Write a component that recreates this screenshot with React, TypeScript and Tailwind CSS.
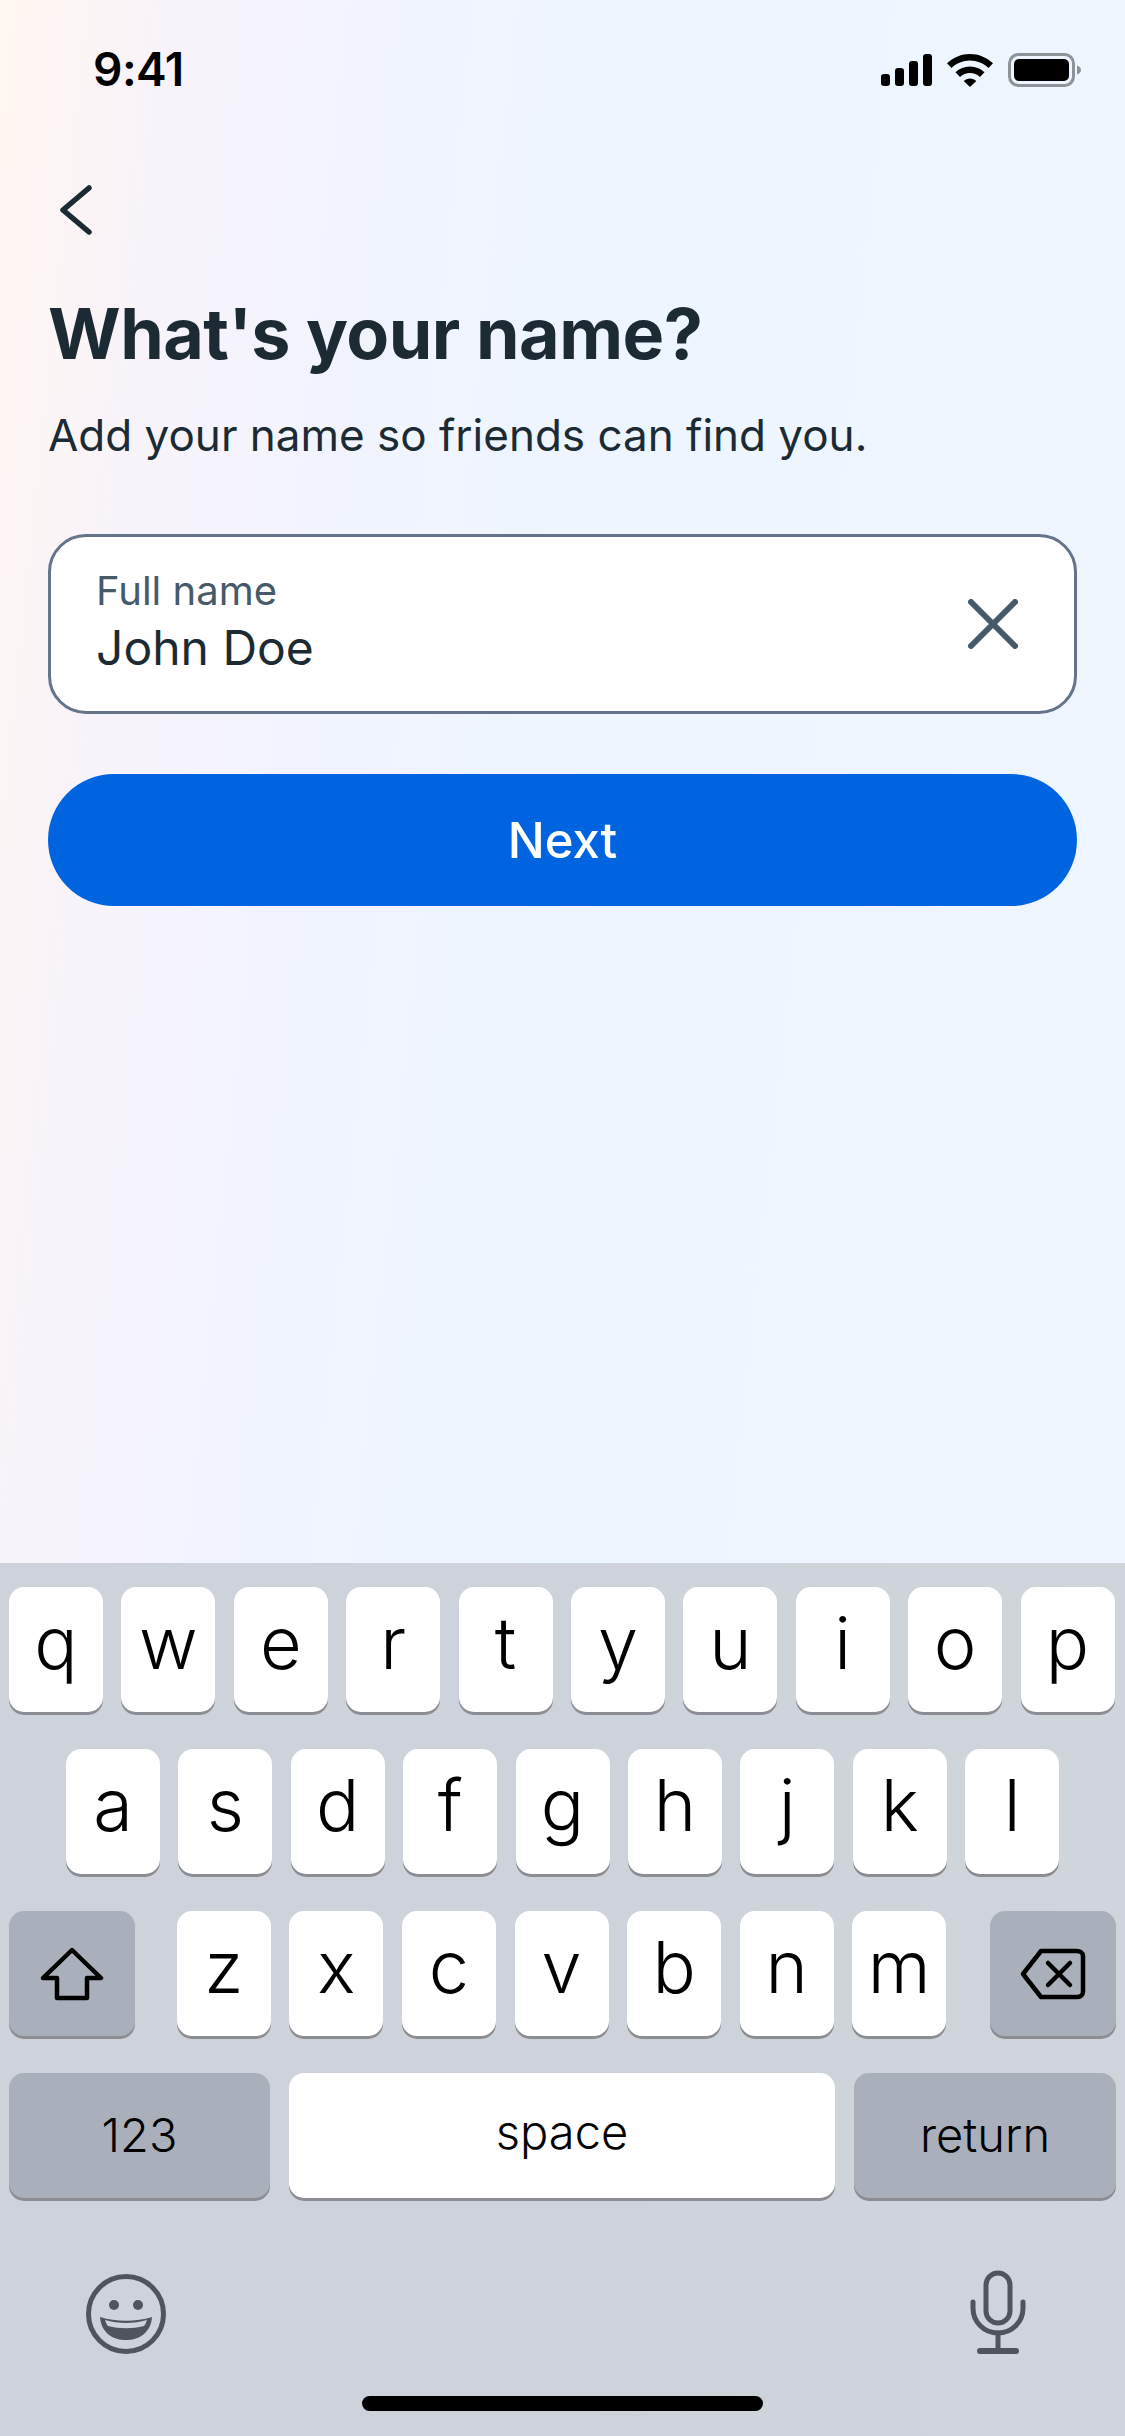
import { ReactNode } from "react";

const rows = ["qwertyuiop", "asdfghjkl", "zxcvbnm"];

function Key({ children, dark, className = "" }: { children: ReactNode; dark?: boolean; className?: string }) {
  return (
    <div
      className={`flex h-[125px] items-center justify-center rounded-[15px] text-black shadow-[0_3px_0_#8b8d92] ${
        dark ? "bg-[#a9b0bc]" : "bg-white"
      } ${className}`}
    >
      {children}
    </div>
  );
}

function Letter({ ch }: { ch: string }) {
  return (
    <Key className="w-[94px] shrink-0 pb-[14px] text-[72px] font-[350] leading-none">
      {ch}
    </Key>
  );
}

function StatusIcons() {
  return (
    <div className="mb-[4px] flex items-center gap-[15px]">
      <svg width="51" height="32" viewBox="0 0 51 32" fill="#000">
        <rect x="0" y="20" width="9" height="12" rx="3" />
        <rect x="14" y="14" width="9" height="18" rx="3" />
        <rect x="28" y="7" width="9" height="25" rx="3" />
        <rect x="42" y="0" width="9" height="32" rx="3" />
      </svg>
      <svg width="46" height="33" viewBox="0 0 46 33" fill="#000">
        <path d="M23 0C31.5 0 39.5 3.3 46 9.300L41.500 14C36.500 9.300 30 6.500 23 6.500S9.500 9.300 4.500 14L0 9.300C6.500 3.300 14.500 0 23 0Z" />
        <path d="M23 12.500C28.500 12.500 33.600 14.600 37.500 18.300L33 22.900C30.200 20.300 26.800 18.900 23 18.900S15.800 20.300 13 22.900L8.500 18.300C12.400 14.600 17.500 12.500 23 12.500Z" />
        <path d="M23 24.500C25.400 24.500 27.600 25.400 29.300 27L23 33L16.700 27C18.400 25.400 20.600 24.500 23 24.500Z" />
      </svg>
      <svg width="74" height="34" viewBox="0 0 74 34" fill="none">
        <rect x="1.500" y="1.500" width="64" height="31" rx="9" stroke="#8e9399" strokeWidth="3" />
        <rect x="6" y="6" width="55" height="22" rx="5" fill="#000" />
        <path d="M69 12.500C71.500 13.300 73 15 73 17S71.500 20.700 69 21.500Z" fill="#8e9399" />
      </svg>
    </div>
  );
}

export default function App() {
  return (
    <div className="flex h-[2436px] w-[1125px] flex-col overflow-hidden bg-[linear-gradient(96deg,#fff7f0_0%,#f8f3fb_13%,#f1f4fd_28%,#edf5ff_50%,#eff6ff_100%)] font-['Inter',sans-serif]">
      <div className="flex flex-1 flex-col">
        <div className="flex h-[91px] items-end justify-between pl-[93px] pr-[43px]">
          <span className="text-[46px] font-semibold leading-[44px] tracking-[-0.5px] text-black">9:41</span>
          <StatusIcons />
        </div>

        <div className="pl-[59px] pt-[94px]">
          <svg width="34" height="50" viewBox="0 0 34 50" fill="none" stroke="#1c2b33" strokeWidth="5.500" strokeLinecap="round" strokeLinejoin="round">
            <path d="M30 3L4 25L30 47" />
          </svg>
        </div>

        <div className="px-[48px]">
          <h1 className="pt-[57px] text-[70px] font-bold leading-[84px] tracking-[-0.5px] text-[#1c2b33]">What's your name?</h1>
          <p className="pt-[31px] text-[44px] leading-[56px] text-[#1c2b33]">Add your name so friends can find you.</p>

          <div className="mt-[71px] flex h-[180px] items-center justify-between rounded-[38px] border-[3px] border-[#64748a] bg-white pl-[45px] pr-[56px]">
            <div className="flex flex-col">
              <span className="text-[40px] leading-[48px] text-[#465a69]">Full name</span>
              <span className="text-[48px] leading-[66px] text-[#1c2b33]">John Doe</span>
            </div>
            <svg width="50" height="50" viewBox="0 0 50 50" fill="none" stroke="#465a69" strokeWidth="6" strokeLinecap="round">
              <path d="M3 3L47 47M47 3L3 47" />
            </svg>
          </div>

          <button className="mt-[60px] flex h-[132px] w-full items-center justify-center rounded-full bg-[#0064e0] pt-[2px] text-[49px] font-medium text-white">
            Next
          </button>
        </div>
      </div>

      <div className="flex h-[873px] flex-col bg-[linear-gradient(90deg,#ced2db_0%,#ced3db_50%,#cfd5da_100%)] px-[9px] pt-[24px]">
        <div className="flex gap-[18.400px]">
          {rows[0].split("").map((c) => (
            <Letter key={c} ch={c} />
          ))}
        </div>
        <div className="mt-[37px] flex justify-center gap-[18.400px]">
          {rows[1].split("").map((c) => (
            <Letter key={c} ch={c} />
          ))}
        </div>
        <div className="mt-[37px] flex justify-between">
          <Key dark className="w-[126px]">
            <svg width="64" height="54" viewBox="0 0 64 54" fill="none" stroke="#000" strokeWidth="4.500" strokeLinejoin="round">
              <path d="M32 3L61 31H47V51H17V31H3Z" />
            </svg>
          </Key>
          <div className="flex gap-[18.600px] pr-[2px]">
            {rows[2].split("").map((c) => (
              <Letter key={c} ch={c} />
            ))}
          </div>
          <Key dark className="w-[126px]">
            <svg width="66" height="52" viewBox="0 0 66 52" fill="none" stroke="#000" strokeWidth="4.500" strokeLinejoin="round" strokeLinecap="round">
              <path d="M21 3H57C60 3 63 5 63 8V44C63 47 60 49 57 49H21L3 26Z" />
              <path d="M28 15L50 37M50 15L28 37" />
            </svg>
          </Key>
        </div>
        <div className="mt-[37px] flex justify-between">
          <Key dark className="w-[261px] text-[47px] font-[350]">123</Key>
          <Key className="w-[546px] pb-[6px] text-[47px] font-[350]">space</Key>
          <Key dark className="w-[262px] text-[47px] font-[350]">return</Key>
        </div>

        <div className="mt-[72px] flex h-[84px] items-end justify-between pl-[77px] pr-[90px]">
          <svg width="80" height="80" viewBox="0 0 80 80" fill="none">
            <circle cx="40" cy="40" r="37.500" stroke="#50555c" strokeWidth="5" />
            <circle cx="28" cy="31" r="5" fill="#50555c" />
            <circle cx="52" cy="31" r="5" fill="#50555c" />
            <path d="M14 43C30 48 50 48 66 43C65 58 54 66 40 66S15 58 14 43Z" fill="#50555c" />
            <path d="M19 46C32 50 48 50 61 46C60 49 59 51 58 52C46 55 34 55 22 52C21 51 20 49 19 46Z" fill="#ced3dc" />
          </svg>
          <svg width="56" height="84" viewBox="0 0 56 84" fill="none" stroke="#50555c" strokeWidth="5" strokeLinecap="round">
            <rect x="16" y="3" width="24" height="50" rx="12" />
            <path d="M3 32V38C3 52 14 63 28 63S53 52 53 38V32" />
            <path d="M28 63V81" />
            <path d="M10 81H46" strokeWidth="6" />
          </svg>
        </div>

        <div className="mt-[42px] flex justify-center">
          <div className="h-[15px] w-[401px] rounded-full bg-black" />
        </div>
      </div>
    </div>
  );
}
